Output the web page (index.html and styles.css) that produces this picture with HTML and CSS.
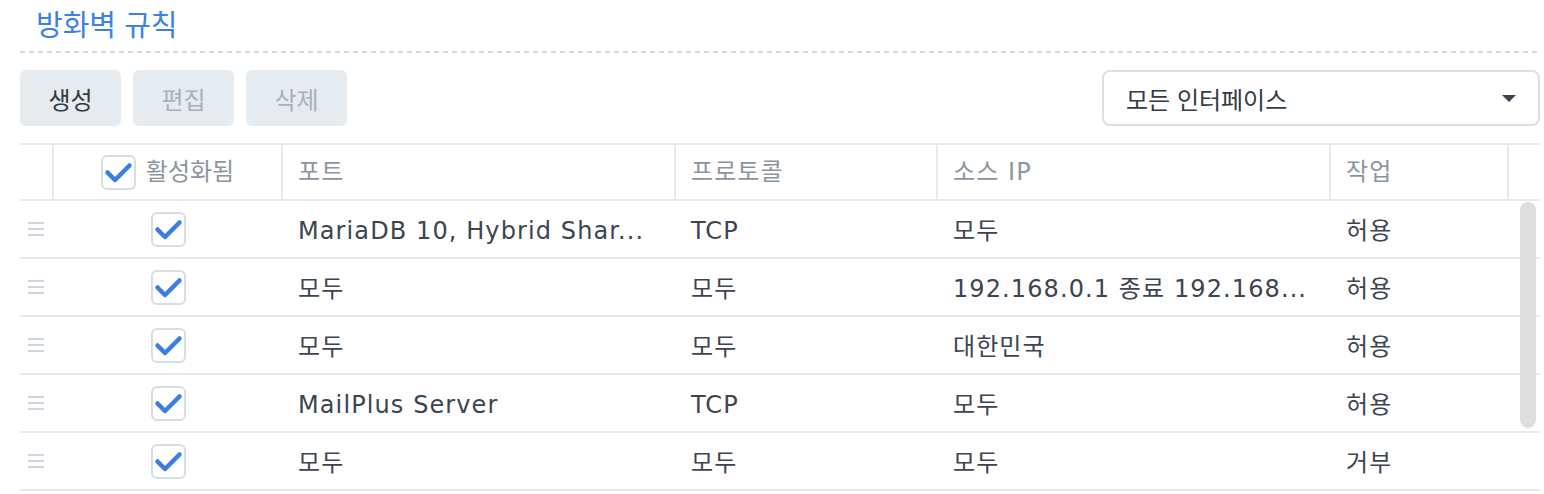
FILE: index.html
```html
<!DOCTYPE html>
<html lang="ko">
<head>
<meta charset="utf-8">
<link rel="stylesheet" href="styles.css">
</head>
<body>
<div class="page">
  <div class="title-bar"><h1 class="title">방화벽 규칙</h1></div>
  <div class="toolbar">
    <div class="btn-group">
      <button class="btn">생성</button>
      <button class="btn disabled">편집</button>
      <button class="btn disabled">삭제</button>
    </div>
    <div class="select">
      <span>모든 인터페이스</span>
      <span class="caret"></span>
    </div>
  </div>
  <div class="grid">
    <div class="row head">
      <div class="cell c-drag"></div>
      <div class="cell c-en">
        <span class="check"><svg viewBox="0 0 35 35"><path d="M6.5 17.5 L14 25 L28.5 10.5"/></svg></span>
        <span>활성화됨</span>
      </div>
      <div class="cell c-port">포트</div>
      <div class="cell c-proto">프로토콜</div>
      <div class="cell c-src">소스 IP</div>
      <div class="cell c-act">작업</div>
      <div class="cell c-end"></div>
    </div>
    <div class="body">
      <div class="row">
        <div class="cell c-drag"><span class="handle"></span></div>
        <div class="cell c-en"><span class="check"><svg viewBox="0 0 35 35"><path d="M6.5 17.5 L14 25 L28.5 10.5"/></svg></span></div>
        <div class="cell c-port">MariaDB 10, Hybrid Shar...</div>
        <div class="cell c-proto">TCP</div>
        <div class="cell c-src">모두</div>
        <div class="cell c-act">허용</div>
        <div class="cell c-end"></div>
      </div>
      <div class="row">
        <div class="cell c-drag"><span class="handle"></span></div>
        <div class="cell c-en"><span class="check"><svg viewBox="0 0 35 35"><path d="M6.5 17.5 L14 25 L28.5 10.5"/></svg></span></div>
        <div class="cell c-port">모두</div>
        <div class="cell c-proto">모두</div>
        <div class="cell c-src">192.168.0.1 종료 192.168...</div>
        <div class="cell c-act">허용</div>
        <div class="cell c-end"></div>
      </div>
      <div class="row">
        <div class="cell c-drag"><span class="handle"></span></div>
        <div class="cell c-en"><span class="check"><svg viewBox="0 0 35 35"><path d="M6.5 17.5 L14 25 L28.5 10.5"/></svg></span></div>
        <div class="cell c-port">모두</div>
        <div class="cell c-proto">모두</div>
        <div class="cell c-src">대한민국</div>
        <div class="cell c-act">허용</div>
        <div class="cell c-end"></div>
      </div>
      <div class="row">
        <div class="cell c-drag"><span class="handle"></span></div>
        <div class="cell c-en"><span class="check"><svg viewBox="0 0 35 35"><path d="M6.5 17.5 L14 25 L28.5 10.5"/></svg></span></div>
        <div class="cell c-port">MailPlus Server</div>
        <div class="cell c-proto">TCP</div>
        <div class="cell c-src">모두</div>
        <div class="cell c-act">허용</div>
        <div class="cell c-end"></div>
      </div>
      <div class="row">
        <div class="cell c-drag"><span class="handle"></span></div>
        <div class="cell c-en"><span class="check"><svg viewBox="0 0 35 35"><path d="M6.5 17.5 L14 25 L28.5 10.5"/></svg></span></div>
        <div class="cell c-port">모두</div>
        <div class="cell c-proto">모두</div>
        <div class="cell c-src">모두</div>
        <div class="cell c-act">거부</div>
        <div class="cell c-end"></div>
      </div>
      <div class="scrollbar"></div>
    </div>
  </div>
</div>
</body>
</html>
```

FILE: styles.css
```css
* { box-sizing: border-box; }
html, body { margin: 0; padding: 0; background: #fff; }
body {
  font-family: "DejaVu Sans", "Noto Sans CJK KR", sans-serif;
  color: #3c4550;
  overflow: hidden;
}
.page {
  padding: 0 4px 0 20px;
}
.title-bar {
  height: 53px;
  padding-left: 16px;
  background: repeating-linear-gradient(to right, #d5dbe2 0 5px, transparent 5px 9px) left bottom / 100% 2px no-repeat;
}
.title {
  margin: 0;
  font-family: "Noto Sans CJK KR", sans-serif;
  font-weight: 400;
  font-size: 29px;
  line-height: 46px;
  color: #3b81e6;
}
.toolbar {
  display: flex;
  justify-content: space-between;
  align-items: center;
  margin-top: 17px;
  height: 56px;
}
.btn-group {
  display: flex;
  gap: 12px;
}
.btn {
  width: 101px;
  height: 56px;
  border: 0;
  border-radius: 6px;
  background: #e6ebf0;
  font-family: "Noto Sans CJK KR", sans-serif;
  font-size: 24px;
  color: #323a43;
  padding: 0;
}
.btn.disabled { color: #a9b0b8; }
.select {
  width: 438px;
  height: 56px;
  border: 2px solid #d8e0e8;
  border-radius: 8px;
  display: flex;
  align-items: center;
  justify-content: space-between;
  padding: 0 22px 0 22px;
  font-family: "Noto Sans CJK KR", sans-serif;
  font-size: 24px;
  color: #333b44;
}
.caret {
  width: 0; height: 0;
  border-left: 7px solid transparent;
  border-right: 7px solid transparent;
  border-top: 7px solid #3a434d;
}
.grid {
  margin-top: 17px;
}
.row {
  display: flex;
  height: 58px;
  border-bottom: 2px solid #e5e9ee;
}
.row.head {
  border-top: 2px solid #e5e9ee;
  color: #8c959e;
}
.cell {
  display: flex;
  align-items: center;
  padding-left: 15px;
  padding-top: 4px;
  font-size: 24px;
  line-height: 30px;
  letter-spacing: 1.1px;
  white-space: nowrap;
  overflow: hidden;
}
.head .cell { border-right: 2px solid #e5e9ee; padding-top: 0; }
.head .cell.c-end { border-right: 0; }
.c-drag { width: 34px; padding-left: 8px; padding-top: 0; }
.c-en { width: 229px; justify-content: center; padding-left: 0; padding-top: 0; gap: 10px; letter-spacing: 0; }
.c-port { width: 393px; }
.c-proto { width: 262px; }
.c-src { width: 393px; }
.c-act { width: 178px; }
.c-end { flex: 1; }
.check {
  width: 35px;
  height: 35px;
  border: 2px solid #d5dde6;
  border-radius: 6px;
  background: #fff;
  display: block;
  position: relative;
  flex: none;
}
.check svg {
  position: absolute;
  left: -2px; top: -2px;
  width: 35px; height: 35px;
  fill: none;
  stroke: #3a7ee2;
  stroke-width: 4.5;
  stroke-linecap: round;
  stroke-linejoin: round;
}
.handle {
  display: block;
  width: 16px;
  height: 14px;
  background:
    linear-gradient(#cfd8e1, #cfd8e1) 0 0 / 16px 2px no-repeat,
    linear-gradient(#cfd8e1, #cfd8e1) 0 6px / 16px 2px no-repeat,
    linear-gradient(#cfd8e1, #cfd8e1) 0 12px / 16px 2px no-repeat;
}
.body { position: relative; }
.scrollbar {
  position: absolute;
  right: 4px;
  top: 1px;
  width: 16px;
  height: 226px;
  border-radius: 8px;
  background: #dedede;
}
```
